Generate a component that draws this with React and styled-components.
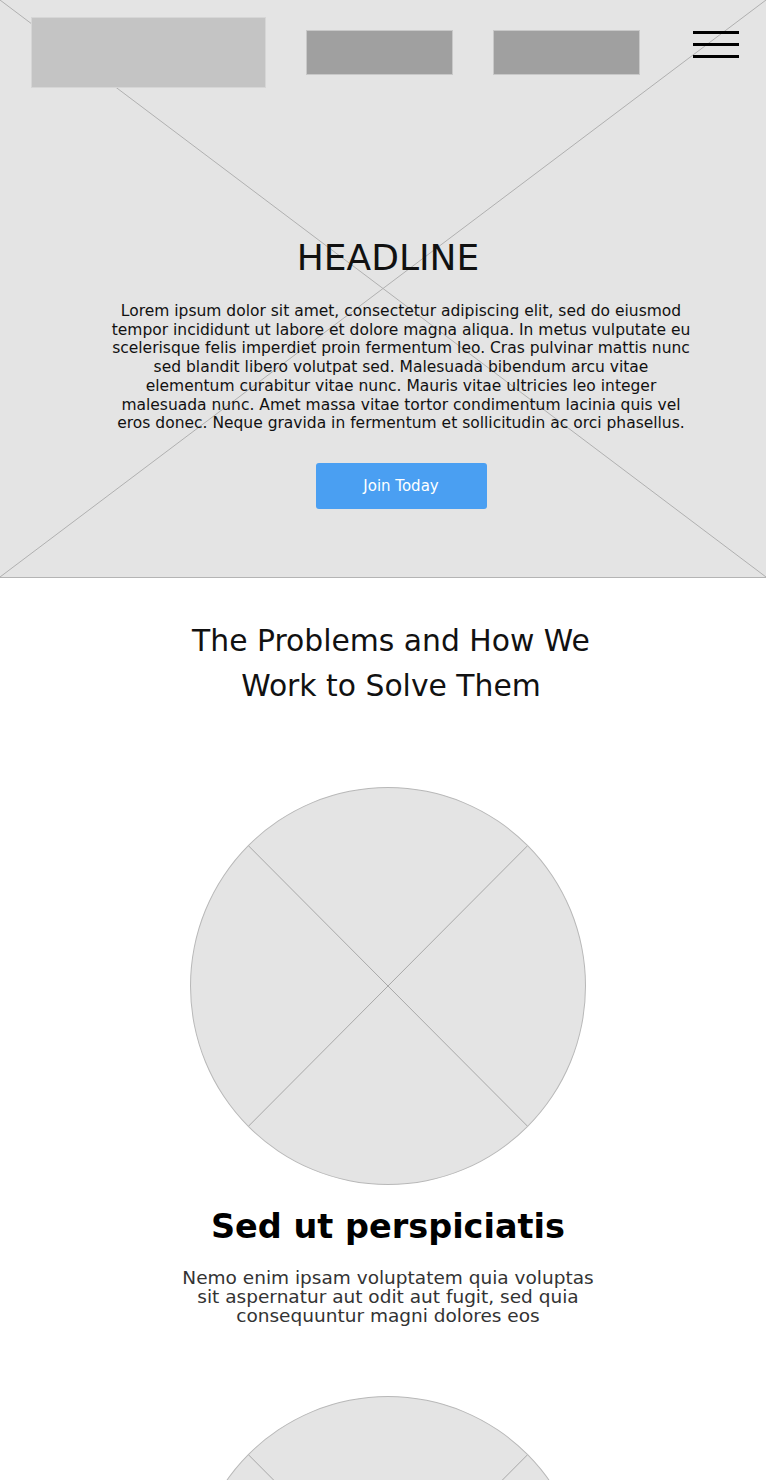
import styled, { createGlobalStyle } from "styled-components";

const GlobalStyle = createGlobalStyle`
  html, body {
    margin: 0;
    padding: 0;
    background: #ffffff;
  }
  body {
    font-family: "DejaVu Sans", "Noto Sans", sans-serif;
    color: #000;
  }
`;

const Hero = styled.section`
  position: relative;
  height: 577px;
  background: #e4e4e4;
  border-bottom: 1px solid #b4b4b4;
  overflow: hidden;
`;

const Cross = styled.svg`
  position: absolute;
  inset: 0;
  width: 100%;
  height: 100%;
  z-index: 0;
`;

const HeroInner = styled.div`
  position: relative;
  z-index: 1;
  display: flex;
  flex-direction: column;
  align-items: center;
`;

const Header = styled.header`
  align-self: stretch;
  display: flex;
  align-items: center;
  padding: 17px 27px 0 31px;
`;

const Logo = styled.div`
  width: 235px;
  height: 71px;
  background: #c4c4c4;
  border: 1px solid #d6d6d6;
  box-sizing: border-box;
`;

const NavBox = styled.div`
  width: 147px;
  height: 45px;
  margin-left: 40px;
  background: #a0a0a0;
  border: 1px solid #c8c8c8;
  box-sizing: border-box;
`;

const Burger = styled.div`
  align-self: flex-start;
  margin: 14px 0 0 auto;
  width: 46px;
  display: flex;
  flex-direction: column;
  gap: 9px;

  span {
    display: block;
    height: 3px;
    background: #000;
  }
`;

const Headline = styled.h1`
  margin: 148px 0 0 10px;
  font-size: 36px;
  font-weight: 400;
  line-height: 44px;
  color: #111;
`;

const Lead = styled.p`
  margin: 22px 0 0 36px;
  font-size: 15.5px;
  line-height: 18.7px;
  text-align: center;
  color: #111;

  span {
    display: block;
    white-space: nowrap;
  }
`;

const JoinButton = styled.button`
  margin: 30px 0 0 36px;
  width: 171px;
  height: 46px;
  border: none;
  border-radius: 3px;
  background: #4a9ff2;
  color: #fff;
  font-family: inherit;
  font-size: 15px;
  font-weight: 400;
`;

const Problems = styled.section`
  display: flex;
  flex-direction: column;
  align-items: center;
  padding-top: 40px;
`;

const SectionTitle = styled.h2`
  margin: 0 0 0 16px;
  font-size: 29.8px;
  font-weight: 400;
  line-height: 45px;
  text-align: center;
  color: #111;
`;

const Feature = styled.div`
  display: flex;
  flex-direction: column;
  align-items: center;
  margin: ${(p) => p.$top}px 0 0 10px;
`;

const CircleWrap = styled.div`
  width: 396px;
  height: 398px;
  border-radius: 50%;
  border: 1px solid #b8b8b8;
  box-sizing: border-box;
  background: #e4e4e4;
  overflow: hidden;
`;

const CircleCross = styled.svg`
  display: block;
  width: 100%;
  height: 100%;
`;

const FeatureTitle = styled.h3`
  margin: 18px 0 0;
  font-size: 33.5px;
  font-weight: 700;
  line-height: 48px;
  color: #000;
`;

const FeatureText = styled.p`
  margin: 17px 0 0;
  font-size: 18.5px;
  line-height: 19px;
  text-align: center;
  color: #333;

  span {
    display: block;
    white-space: nowrap;
  }
`;

const PlaceholderCircle = () => (
  <CircleWrap>
    <CircleCross viewBox="0 0 100 100" preserveAspectRatio="none">
      <line x1="14.6" y1="14.6" x2="85.4" y2="85.4" stroke="#a8a8a8" strokeWidth="1" vectorEffect="non-scaling-stroke" />
      <line x1="85.4" y1="14.6" x2="14.6" y2="85.4" stroke="#a8a8a8" strokeWidth="1" vectorEffect="non-scaling-stroke" />
    </CircleCross>
  </CircleWrap>
);

const leadLines = [
  "Lorem ipsum dolor sit amet, consectetur adipiscing elit, sed do eiusmod",
  "tempor incididunt ut labore et dolore magna aliqua. In metus vulputate eu",
  "scelerisque felis imperdiet proin fermentum leo. Cras pulvinar mattis nunc",
  "sed blandit libero volutpat sed. Malesuada bibendum arcu vitae",
  "elementum curabitur vitae nunc. Mauris vitae ultricies leo integer",
  "malesuada nunc. Amet massa vitae tortor condimentum lacinia quis vel",
  "eros donec. Neque gravida in fermentum et sollicitudin ac orci phasellus.",
];

const featureLines = [
  "Nemo enim ipsam voluptatem quia voluptas",
  "sit aspernatur aut odit aut fugit, sed quia",
  "consequuntur magni dolores eos",
];

const App = () => {
  return (
    <>
      <GlobalStyle />
      <Hero>
        <Cross viewBox="0 0 766 577" preserveAspectRatio="none">
          <line x1="0" y1="0" x2="766" y2="577" stroke="#b0b0b0" strokeWidth="1" />
          <line x1="766" y1="0" x2="0" y2="577" stroke="#b0b0b0" strokeWidth="1" />
        </Cross>
        <HeroInner>
          <Header>
            <Logo />
            <NavBox />
            <NavBox />
            <Burger>
              <span />
              <span />
              <span />
            </Burger>
          </Header>
          <Headline>HEADLINE</Headline>
          <Lead>
            {leadLines.map((line) => (
              <span key={line}>{line}</span>
            ))}
          </Lead>
          <JoinButton>Join Today</JoinButton>
        </HeroInner>
      </Hero>
      <Problems>
        <SectionTitle>
          The Problems and How We
          <br />
          Work to Solve Them
        </SectionTitle>
        <Feature $top={79}>
          <PlaceholderCircle />
          <FeatureTitle>Sed ut perspiciatis</FeatureTitle>
          <FeatureText>
            {featureLines.map((line) => (
              <span key={line}>{line}</span>
            ))}
          </FeatureText>
        </Feature>
        <Feature $top={71}>
          <PlaceholderCircle />
        </Feature>
      </Problems>
    </>
  );
};

export default App;
